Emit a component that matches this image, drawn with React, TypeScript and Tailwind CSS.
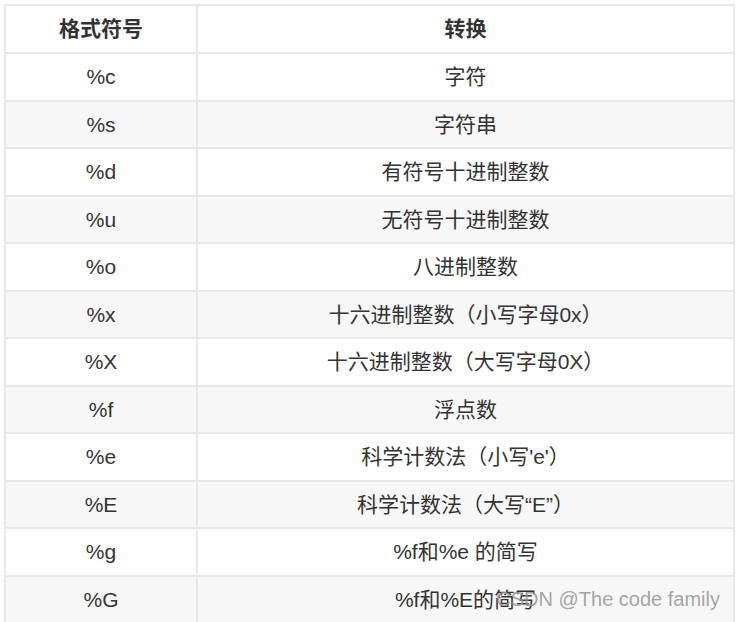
const ROWS: [string, string][] = [
  ["%c", "字符"],
  ["%s", "字符串"],
  ["%d", "有符号十进制整数"],
  ["%u", "无符号十进制整数"],
  ["%o", "八进制整数"],
  ["%x", "十六进制整数（小写字母0x）"],
  ["%X", "十六进制整数（大写字母0X）"],
  ["%f", "浮点数"],
  ["%e", "科学计数法（小写'e'）"],
  ["%E", "科学计数法（大写“E”）"],
  ["%g", "%f和%e 的简写"],
  ["%G", "%f和%E的简写"],
];

export default function App() {
  return (
    <div
      className="relative h-[622px] w-[736px] overflow-hidden bg-white pl-[4px] pt-[4px] text-[#333]"
      style={{ fontFamily: '"Liberation Sans", "Noto Sans CJK SC", sans-serif' }}
    >
      <div className="w-[731px] border-l-2 border-r-2 border-t-2 border-[#e8e8e8]">
        <div className="flex h-[48px] border-b-2 border-[#e8e8e8] text-[21px] font-bold">
          <div className="flex w-[192px] items-center justify-center border-r-2 border-[#e8e8e8]">格式符号</div>
          <div className="flex flex-1 items-center justify-center">转换</div>
        </div>
        {ROWS.map(([fmt, desc], i) => (
          <div
            key={fmt}
            className={`flex h-[47.5px] border-b-2 border-[#e8e8e8] text-[21px] ${i % 2 === 1 ? "bg-[#f7f7f7]" : "bg-white"}`}
          >
            <div className="flex w-[192px] items-center justify-center border-r-2 border-[#e8e8e8]">{fmt}</div>
            <div className="flex flex-1 items-center justify-center">{desc}</div>
          </div>
        ))}
      </div>
      {/* watermark sits over the last row, as in the source image */}
      <div className="absolute bottom-[8px] right-[16px] text-[20px] text-[#9a9a9a]/90">CSDN @The code family</div>
    </div>
  );
}
